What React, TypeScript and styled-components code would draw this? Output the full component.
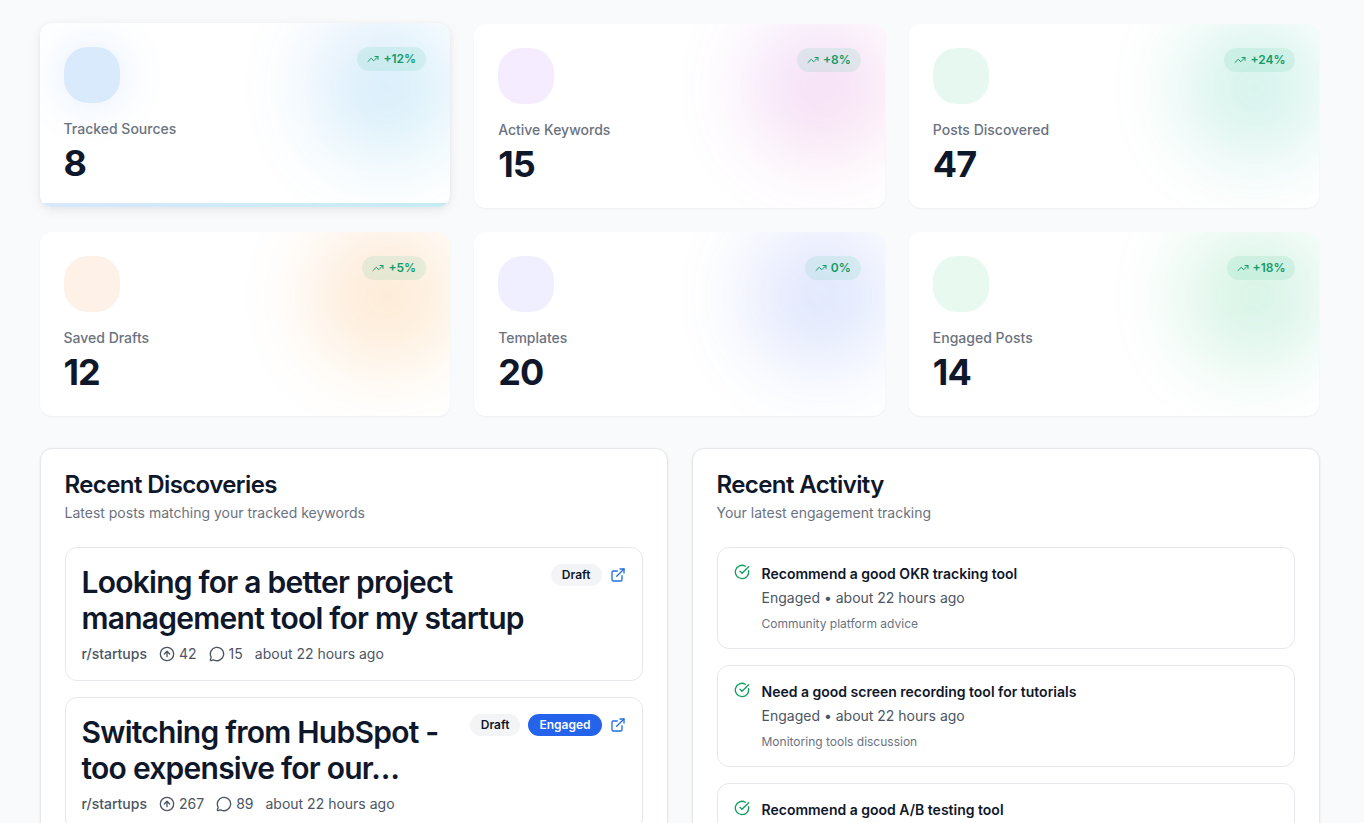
import React from "react";
import styled, { createGlobalStyle, css } from "styled-components";
import { TrendingUp, CircleArrowUp, MessageCircle, ExternalLink, CircleCheckBig } from "lucide-react";

const GlobalStyle = createGlobalStyle`
  *, *::before, *::after { box-sizing: border-box; }
  body {
    margin: 0;
    background: #f9fafc;
    font-family: Inter, "Liberation Sans", sans-serif;
    color: #0f172a;
  }
  h2, h3, h4, p, ul, dl, dd, dt { margin: 0; padding: 0; }
  ul { list-style: none; }
`;

const Page = styled.main`
  padding: 24px 29px 24px 24px;
`;

const Content = styled.div`
  display: flex;
  flex-direction: column;
  gap: 32px;
  max-width: 1280px;
  margin: 0 auto;
`;

const StatGrid = styled.dl`
  display: grid;
  grid-template-columns: repeat(3, minmax(0, 1fr));
  gap: 24px;
`;

const StatCard = styled.div<{ $raised?: boolean }>`
  position: relative;
  display: flex;
  flex-direction: column;
  padding: 24px;
  border-radius: 12px;
  background: #ffffff;
  overflow: hidden;
  box-shadow: 0 1px 2px rgba(15, 23, 42, 0.05);
  ${(p) =>
    p.$raised &&
    css`
      transform: translateY(-1px);
      box-shadow: 0 3px 12px rgba(15, 23, 42, 0.07), 0 1px 4px rgba(15, 23, 42, 0.04);
    `}
`;

const Glow = styled.span<{ $from: string; $to: string }>`
  position: absolute;
  top: -8px;
  right: -8px;
  width: 144px;
  height: 144px;
  border-radius: 50%;
  background: linear-gradient(135deg, ${(p) => p.$from}, ${(p) => p.$to});
  opacity: 0.18;
  filter: blur(40px);
`;

const Underline = styled.span<{ $from: string; $to: string }>`
  position: absolute;
  left: 0;
  right: 0;
  bottom: 0;
  height: 4px;
  background: linear-gradient(90deg, ${(p) => p.$from}, ${(p) => p.$to});
`;

const StatTop = styled.div`
  position: relative;
  display: flex;
  align-items: flex-start;
  justify-content: space-between;
  margin-bottom: 16px;
`;

const Tile = styled.span<{ $color: string; $lit?: boolean }>`
  width: 56px;
  height: 56px;
  border-radius: 24px;
  background: ${(p) => p.$color};
  box-shadow: ${(p) => (p.$lit ? "0 0 40px 8px rgba(59, 140, 246, 0.1)" : "none")};
`;

const Trend = styled.span`
  display: inline-flex;
  align-items: center;
  gap: 4px;
  height: 24px;
  padding: 0 10px;
  border-radius: 12px;
  background: rgba(16, 185, 129, 0.1);
  color: #159a68;
  font-size: 12px;
  line-height: 16px;
  font-weight: 600;
`;

const StatLabel = styled.dt`
  position: relative;
  font-size: 14px;
  line-height: 20px;
  font-weight: 500;
  color: #6b7280;
  margin-bottom: 4px;
`;

const StatValue = styled.dd`
  position: relative;
  font-size: 36px;
  line-height: 40px;
  font-weight: 700;
  letter-spacing: -0.025em;
`;

const Columns = styled.div`
  display: grid;
  grid-template-columns: repeat(2, minmax(0, 1fr));
  gap: 24px;
`;

const Panel = styled.section`
  padding: 24px;
  border: 1px solid #e5e7eb;
  border-radius: 12px;
  background: #ffffff;
  box-shadow: 0 1px 3px rgba(15, 23, 42, 0.08);
`;

const PanelTitle = styled.h2`
  font-size: 24px;
  line-height: 24px;
  font-weight: 600;
  letter-spacing: -0.025em;
`;

const PanelHint = styled.p`
  margin-top: 6px;
  margin-bottom: 24px;
  font-size: 14px;
  line-height: 20px;
  color: #6b7280;
`;

const List = styled.ul`
  display: flex;
  flex-direction: column;
  gap: 16px;
`;

const Item = styled.li`
  padding: 16px;
  border: 1px solid #e5e7eb;
  border-radius: 12px;
`;

const PostHead = styled.div`
  display: flex;
  align-items: flex-start;
  justify-content: space-between;
  gap: 8px;
  margin-bottom: 8px;
`;

const PostTitle = styled.h3`
  flex: 1;
  font-size: 30px;
  line-height: 36px;
  font-weight: 600;
  letter-spacing: -0.025em;
`;

const PostTags = styled.div`
  display: flex;
  align-items: center;
  gap: 8px;
`;

const Tag = styled.span<{ $solid?: boolean }>`
  padding: 3px 11px;
  border-radius: 11px;
  font-size: 12px;
  line-height: 16px;
  font-weight: 600;
  background: ${(p) => (p.$solid ? "#2563eb" : "#f3f4f6")};
  color: ${(p) => (p.$solid ? "#f8fafc" : "#0f172a")};
`;

const OpenLink = styled.a`
  display: flex;
  color: #226fe0;
`;

const Meta = styled.div`
  display: flex;
  align-items: center;
  gap: 12px;
  font-size: 14px;
  line-height: 20px;
  color: #4b5563;
`;

const Subreddit = styled.span`
  font-weight: 500;
`;

const Count = styled.span`
  display: inline-flex;
  align-items: center;
  gap: 4px;
`;

const ActivityItem = styled(Item)`
  display: flex;
  align-items: flex-start;
  gap: 12px;
  color: #109e5c;
`;

const ActivityTitle = styled.h3`
  font-size: 14px;
  line-height: 20px;
  font-weight: 600;
  color: #0f172a;
`;

const ActivityWhen = styled.p`
  margin-top: 4px;
  font-size: 14px;
  line-height: 20px;
  color: #4b5563;
`;

const ActivityNote = styled.p`
  margin-top: 8px;
  font-size: 12px;
  line-height: 16px;
  color: #6b7280;
`;

const stats = [
  { label: "Tracked Sources", value: 8, trend: "+12%", from: "#3b82f6", to: "#06b6d4", tile: "#d9eafc", raised: true },
  { label: "Active Keywords", value: 15, trend: "+8%", from: "#a855f7", to: "#ec4899", tile: "#f5edff" },
  { label: "Posts Discovered", value: 47, trend: "+24%", from: "#10b981", to: "#14b8a6", tile: "#e7f8f1" },
  { label: "Saved Drafts", value: 12, trend: "+5%", from: "#f97316", to: "#f59e0b", tile: "#fef1e7" },
  { label: "Templates", value: 20, trend: "0%", from: "#6366f1", to: "#3b82f6", tile: "#efefff" },
  { label: "Engaged Posts", value: 14, trend: "+18%", from: "#22c55e", to: "#10b981", tile: "#e8f9ef" },
];

const posts = [
  { title: "Looking for a better project management tool for my startup", votes: 42, comments: 15, engaged: false },
  { title: "Switching from HubSpot - too expensive for our…", votes: 267, comments: 89, engaged: true },
];

const activities = [
  { title: "Recommend a good OKR tracking tool", note: "Community platform advice" },
  { title: "Need a good screen recording tool for tutorials", note: "Monitoring tools discussion" },
  { title: "Recommend a good A/B testing tool", note: "" },
];

export default function App() {
  return (
    <>
      <GlobalStyle />
      <Page>
        <Content>
          <StatGrid>
            {stats.map((s) => (
              <StatCard key={s.label} $raised={s.raised}>
                <Glow $from={s.from} $to={s.to} />
                <StatTop>
                  <Tile $color={s.tile} $lit={s.raised} />
                  <Trend>
                    <TrendingUp size={12} />
                    {s.trend}
                  </Trend>
                </StatTop>
                <StatLabel>{s.label}</StatLabel>
                <StatValue>{s.value}</StatValue>
                {s.raised && <Underline $from="#d6e8fd" $to="#c6ecf2" />}
              </StatCard>
            ))}
          </StatGrid>
          <Columns>
            <Panel>
              <PanelTitle>Recent Discoveries</PanelTitle>
              <PanelHint>Latest posts matching your tracked keywords</PanelHint>
              <List>
                {posts.map((p) => (
                  <Item key={p.title}>
                    <PostHead>
                      <PostTitle>{p.title}</PostTitle>
                      <PostTags>
                        <Tag>Draft</Tag>
                        {p.engaged && <Tag $solid>Engaged</Tag>}
                        <OpenLink href="#" aria-label="Open post">
                          <ExternalLink size={16} />
                        </OpenLink>
                      </PostTags>
                    </PostHead>
                    <Meta>
                      <Subreddit>r/startups</Subreddit>
                      <Count>
                        <CircleArrowUp size={16} />
                        {p.votes}
                      </Count>
                      <Count>
                        <MessageCircle size={16} />
                        {p.comments}
                      </Count>
                      <span>about 22 hours ago</span>
                    </Meta>
                  </Item>
                ))}
              </List>
            </Panel>
            <Panel>
              <PanelTitle>Recent Activity</PanelTitle>
              <PanelHint>Your latest engagement tracking</PanelHint>
              <List>
                {activities.map((a) => (
                  <ActivityItem key={a.title}>
                    <CircleCheckBig size={16} />
                    <div>
                      <ActivityTitle>{a.title}</ActivityTitle>
                      {a.note && (
                        <>
                          <ActivityWhen>Engaged • about 22 hours ago</ActivityWhen>
                          <ActivityNote>{a.note}</ActivityNote>
                        </>
                      )}
                    </div>
                  </ActivityItem>
                ))}
              </List>
            </Panel>
          </Columns>
        </Content>
      </Page>
    </>
  );
}
